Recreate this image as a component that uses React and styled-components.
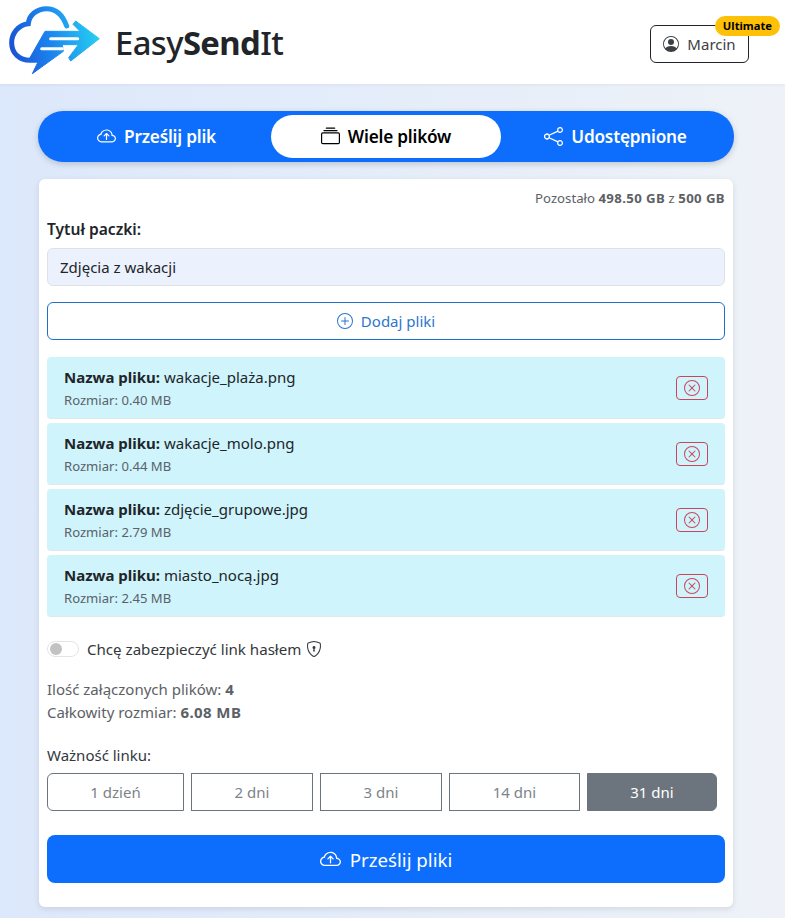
import React from 'react';
import styled, { createGlobalStyle } from 'styled-components';
import {
  BsCloudArrowUp,
  BsCollection,
  BsShare,
  BsPlusCircle,
  BsXCircle,
  BsPersonCircle,
  BsShieldLock,
} from 'react-icons/bs';

const GlobalStyle = createGlobalStyle`
  html, body {
    margin: 0;
    padding: 0;
  }
  body {
    font-family: "Noto Sans", "Open Sans", sans-serif;
    font-size: 15px;
    color: #212529;
    background: linear-gradient(90deg, #dce8fb 0%, #eef2f8 100%);
  }
  * {
    box-sizing: border-box;
  }
`;

const Page = styled.div`
  width: 785px;
  height: 918px;
  overflow: hidden;
`;

const Header = styled.header`
  height: 84px;
  background: #fff;
  box-shadow: 0 1px 3px rgba(0, 0, 0, 0.05);
  display: flex;
  align-items: center;
  justify-content: space-between;
  padding: 0 36px 0 5px;
`;

const Brand = styled.div`
  display: flex;
  align-items: center;
  gap: 10px;
  svg {
    margin-bottom: 4px;
  }
`;

const BrandName = styled.div`
  font-size: 32.8px;
  font-weight: 500;
  color: #212529;
  letter-spacing: -0.6px;
  b {
    font-weight: 700;
  }
`;

const UserButton = styled.div`
  position: relative;
  width: 99px;
  height: 38px;
  border: 1px solid #212529;
  border-radius: 6px;
  display: flex;
  align-items: center;
  justify-content: center;
  gap: 8px;
  font-size: 15px;
  color: #3c4044;
  margin-top: 4px;
`;

const Badge = styled.span`
  position: absolute;
  top: -10px;
  right: -32px;
  background: #ffc107;
  color: #000;
  font-size: 11.2px;
  font-weight: 700;
  border-radius: 10px;
  padding: 2px 8px 3px;
  line-height: 15px;
`;

const Main = styled.main`
  padding: 27px 51px 0 38px;
`;

const Tabs = styled.nav`
  height: 51px;
  background: #0d6efd;
  border-radius: 25px;
  box-shadow: 0 2px 6px rgba(0, 0, 0, 0.18);
  display: grid;
  grid-template-columns: 233px 230px 233px;
  align-items: center;
`;

const Tab = styled.div`
  height: 43px;
  border-radius: 22px;
  display: flex;
  align-items: center;
  justify-content: center;
  gap: 8px;
  font-size: 17.2px;
  font-weight: 600;
  letter-spacing: -0.2px;
  color: ${(p) => (p.$active ? '#000' : '#fff')};
  background: ${(p) => (p.$active ? '#fff' : 'transparent')};
  &:first-child {
    padding-left: 4px;
  }
  &:last-child {
    padding-right: 4px;
  }
`;

const Card = styled.section`
  margin: 17px 1px 0;
  height: 728px;
  background: #fff;
  border-radius: 6px;
  box-shadow: 0 2px 6px rgba(0, 0, 0, 0.1);
  padding: 10px 8px 0;
`;

const Quota = styled.div`
  text-align: right;
  font-size: 13.2px;
  line-height: 18px;
  color: #5c6166;
  b {
    font-weight: 700;
    letter-spacing: 0.4px;
  }
`;

const FieldLabel = styled.div`
  margin-top: 12px;
  font-size: 15.6px;
  line-height: 20px;
  font-weight: 600;
  color: #212529;
`;

const TitleInput = styled.div`
  margin-top: 9px;
  height: 38px;
  background: #ecf2fd;
  border: 1px solid #dee2e6;
  border-radius: 6px;
  padding: 0 12px;
  display: flex;
  align-items: center;
  font-size: 15px;
  color: #212529;
`;

const AddButton = styled.div`
  margin-top: 16px;
  height: 38px;
  border: 1px solid #1f6fc9;
  border-radius: 6px;
  display: flex;
  align-items: center;
  justify-content: center;
  gap: 8px;
  font-size: 15px;
  color: #2a76cf;
`;

const FileList = styled.div`
  margin-top: 17px;
  display: flex;
  flex-direction: column;
  gap: 4px;
`;

const FileRow = styled.div`
  height: 62px;
  background: #cff4fc;
  border-bottom: 1px solid #dfe8ea;
  border-radius: 4px;
  padding: 0 17px;
  display: flex;
  align-items: center;
  justify-content: space-between;
`;

const FileName = styled.div`
  font-size: 15px;
  line-height: 20px;
  color: #212529;
  b {
    font-weight: 700;
  }
`;

const FileSize = styled.div`
  margin-top: 4px;
  font-size: 13.1px;
  line-height: 18px;
  color: #5a6268;
`;

const RemoveButton = styled.div`
  width: 32px;
  height: 24px;
  border: 1px solid #c9465a;
  border-radius: 4px;
  display: flex;
  align-items: center;
  justify-content: center;
  color: #c9465a;
`;

const PasswordRow = styled.div`
  margin-top: 22px;
  height: 20px;
  display: flex;
  align-items: center;
  gap: 5px;
  font-size: 15.1px;
  color: #33383c;
`;

const Toggle = styled.span`
  width: 32px;
  height: 16px;
  border: 1px solid #e2e5e8;
  border-radius: 8px;
  margin-right: 3px;
  display: flex;
  align-items: center;
  padding-left: 2px;
  &::before {
    content: '';
    width: 12px;
    height: 12px;
    border-radius: 50%;
    background: #c2c2c2;
  }
`;

const Stats = styled.div`
  margin-top: 19px;
  font-size: 15px;
  line-height: 23px;
  color: #5c6166;
  b {
    font-weight: 700;
    letter-spacing: 0.4px;
  }
`;

const ExpiryLabel = styled.div`
  margin-top: 21px;
  font-size: 15px;
  line-height: 20px;
  color: #33383c;
`;

const ExpiryGroup = styled.div`
  margin-top: 8px;
  display: grid;
  grid-template-columns: 137px 122px 122px 131px 130px;
  gap: 7px;
`;

const ExpiryOption = styled.div`
  height: 38px;
  border: 1px solid #6c757d;
  border-radius: ${(p) => p.$radius};
  background: ${(p) => (p.$active ? '#6c757d' : '#fff')};
  color: ${(p) => (p.$active ? '#fff' : '#7c838a')};
  display: flex;
  align-items: center;
  justify-content: center;
  font-size: 15px;
`;

const SubmitButton = styled.div`
  margin-top: 24px;
  height: 48px;
  background: #0d6efd;
  color: #fff;
  border-radius: 8px;
  display: flex;
  align-items: center;
  justify-content: center;
  gap: 9px;
  font-size: 18.7px;
`;

const files = [
  { name: 'wakacje_plaża.png', size: '0.40 MB' },
  { name: 'wakacje_molo.png', size: '0.44 MB' },
  { name: 'zdjęcie_grupowe.jpg', size: '2.79 MB' },
  { name: 'miasto_nocą.jpg', size: '2.45 MB' },
];

const expiry = ['1 dzień', '2 dni', '3 dni', '14 dni', '31 dni'];

const Logo = () => (
  <svg width="100" height="76" viewBox="0 0 300 228" fill="none">
    <defs>
      <linearGradient id="logoGrad" x1="10" y1="150" x2="285" y2="90" gradientUnits="userSpaceOnUse">
        <stop offset="0" stopColor="#1a4fd2" />
        <stop offset="0.45" stopColor="#1b84ee" />
        <stop offset="1" stopColor="#27d2f2" />
      </linearGradient>
    </defs>
    <path
      d="M185 72 C172 35 150 20 125 20 C95 20 72 40 70 65 C40 68 20 95 20 122 C20 155 45 175 75 175 L105 175"
      stroke="url(#logoGrad)"
      strokeWidth="15"
      strokeLinecap="round"
    />
    <path
      d="M120 88 L225 88 L204 67 L212 57 L283 110 L197 177 L191 167 L220 128 L172 128 L175 148 L82 215 L100 178 L72 172 Z"
      fill="url(#logoGrad)"
      stroke="url(#logoGrad)"
      strokeWidth="3"
      strokeLinejoin="round"
    />
    <path d="M137 110 H218 M110 140 H172" stroke="#fff" strokeWidth="9" strokeLinecap="round" />
  </svg>
);

const App = () => (
  <Page>
    <GlobalStyle />
    <Header>
      <Brand>
        <Logo />
        <BrandName>
          Easy<b>Send</b>It
        </BrandName>
      </Brand>
      <UserButton>
        <BsPersonCircle size={16} />
        Marcin
        <Badge>Ultimate</Badge>
      </UserButton>
    </Header>
    <Main>
      <Tabs>
        <Tab>
          <BsCloudArrowUp size={19} />
          Prześlij plik
        </Tab>
        <Tab $active>
          <BsCollection size={19} />
          Wiele plików
        </Tab>
        <Tab>
          <BsShare size={19} />
          Udostępnione
        </Tab>
      </Tabs>
      <Card>
        <Quota>
          Pozostało <b>498.50 GB</b> z <b>500 GB</b>
        </Quota>
        <FieldLabel>Tytuł paczki:</FieldLabel>
        <TitleInput>Zdjęcia z wakacji</TitleInput>
        <AddButton>
          <BsPlusCircle size={16} />
          Dodaj pliki
        </AddButton>
        <FileList>
          {files.map((file) => (
            <FileRow key={file.name}>
              <div>
                <FileName>
                  <b>Nazwa pliku:</b> {file.name}
                </FileName>
                <FileSize>Rozmiar: {file.size}</FileSize>
              </div>
              <RemoveButton>
                <BsXCircle size={16} />
              </RemoveButton>
            </FileRow>
          ))}
        </FileList>
        <PasswordRow>
          <Toggle />
          Chcę zabezpieczyć link hasłem
          <BsShieldLock size={16} />
        </PasswordRow>
        <Stats>
          Ilość załączonych plików: <b>4</b>
          <br />
          Całkowity rozmiar: <b>6.08 MB</b>
        </Stats>
        <ExpiryLabel>Ważność linku:</ExpiryLabel>
        <ExpiryGroup>
          {expiry.map((label, i) => (
            <ExpiryOption
              key={label}
              $active={i === 4}
              $radius={i === 0 ? '6px 0 0 6px' : i === 4 ? '0 6px 6px 0' : '0'}
            >
              {label}
            </ExpiryOption>
          ))}
        </ExpiryGroup>
        <SubmitButton>
          <BsCloudArrowUp size={21} />
          Prześlij pliki
        </SubmitButton>
      </Card>
    </Main>
  </Page>
);

export default App;
